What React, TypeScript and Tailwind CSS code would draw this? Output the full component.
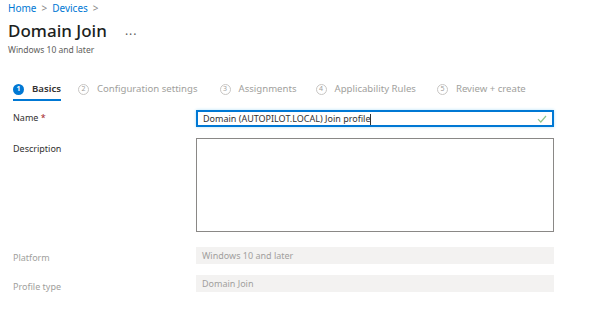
import React from "react";

const steps = [
  { n: "2", label: "Configuration settings", ml: "ml-[17px]" },
  { n: "3", label: "Assignments", ml: "ml-[22px]" },
  { n: "4", label: "Applicability Rules", ml: "ml-[19px]" },
  { n: "5", label: "Review + create", ml: "ml-[21px]" },
];

export default function App() {
  return (
    <div className="w-[591px] h-[329px] bg-white text-[#323130] font-['Noto_Sans',sans-serif] overflow-hidden">
      {/* Header */}
      <div className="px-2 pt-[1px]">
        <div className="flex items-center gap-[5px] text-[10px] text-[#0078d4] leading-[14px]">
          <span>Home</span>
          <span className="text-[#8a8886]">&gt;</span>
          <span>Devices</span>
          <span className="text-[#8a8886]">&gt;</span>
        </div>
        <div className="flex items-center mt-[3px]">
          <h1 className="text-[17px] leading-[26px] font-medium text-[#201f1e]">Domain Join</h1>
          <span className="ml-[18px] text-[12px] text-[#605e5c] tracking-[1px] leading-none">...</span>
        </div>
        <div className="text-[8.5px] text-[#605e5c] leading-[12px]">Windows 10 and later</div>
      </div>

      {/* Steps */}
      <div className="flex items-center px-[13px] mt-[26px] text-[9.6px] leading-[14px]">
        <div className="flex flex-col">
          <div className="flex items-center gap-[8px]">
            <span className="w-[11px] h-[11px] rounded-full bg-[#0078d4] text-white text-[7px] font-bold flex items-center justify-center">1</span>
            <span className="font-semibold text-[#323130]">Basics</span>
          </div>
          <div className="h-[2px] bg-[#0078d4] mt-[3px]" />
        </div>
        {steps.map((s) => (
          <div key={s.n} className={`flex flex-col ${s.ml}`}>
            <div className="flex items-center gap-[8px] text-[#a19f9d]">
              <span className="w-[11px] h-[11px] rounded-full border border-[#c8c6c4] text-[7px] flex items-center justify-center">
                {s.n}
              </span>
              <span>{s.label}</span>
            </div>
            <div className="h-[2px] mt-[3px]" />
          </div>
        ))}
      </div>

      {/* Form */}
      <div className="grid grid-cols-[183px_358px] items-start px-[13px] mt-[7px] text-[9px] leading-[13px]">
        <label className="mt-[3px]">
          Name <span className="text-[#a4262c]">*</span>
        </label>
        <div className="h-[17px] border-2 border-[#0078d4] shadow-[0_0_3px_#b3e0f7] flex items-center pl-[5px] pr-[5px] mt-[2px]">
          <span className="flex-1 text-[#323130]">
            Domain (AUTOPILOT.LOCAL) Join profile<span className="inline-block w-[1px] h-[11px] bg-[#323130] align-middle" />
          </span>
          <svg width="10" height="8" viewBox="0 0 10 8">
            <path d="M1 4.2 L3.8 7 L9 1" fill="none" stroke="#8fc68a" strokeWidth="1.2" />
          </svg>
        </div>

        <label className="mt-[15px]">Description</label>
        <div className="h-[94px] border border-[#8a8886] mt-[11px]" />

        <label className="mt-[19px] text-[#a19f9d]">Platform</label>
        <div className="h-[17px] bg-[#f3f2f1] mt-[15px] flex items-center pl-[6px] text-[#a19f9d]">
          Windows 10 and later
        </div>

        <label className="mt-[16px] text-[#a19f9d]">Profile type</label>
        <div className="h-[17px] bg-[#f3f2f1] mt-[11px] flex items-center pl-[6px] text-[#a19f9d]">Domain Join</div>
      </div>
    </div>
  );
}
